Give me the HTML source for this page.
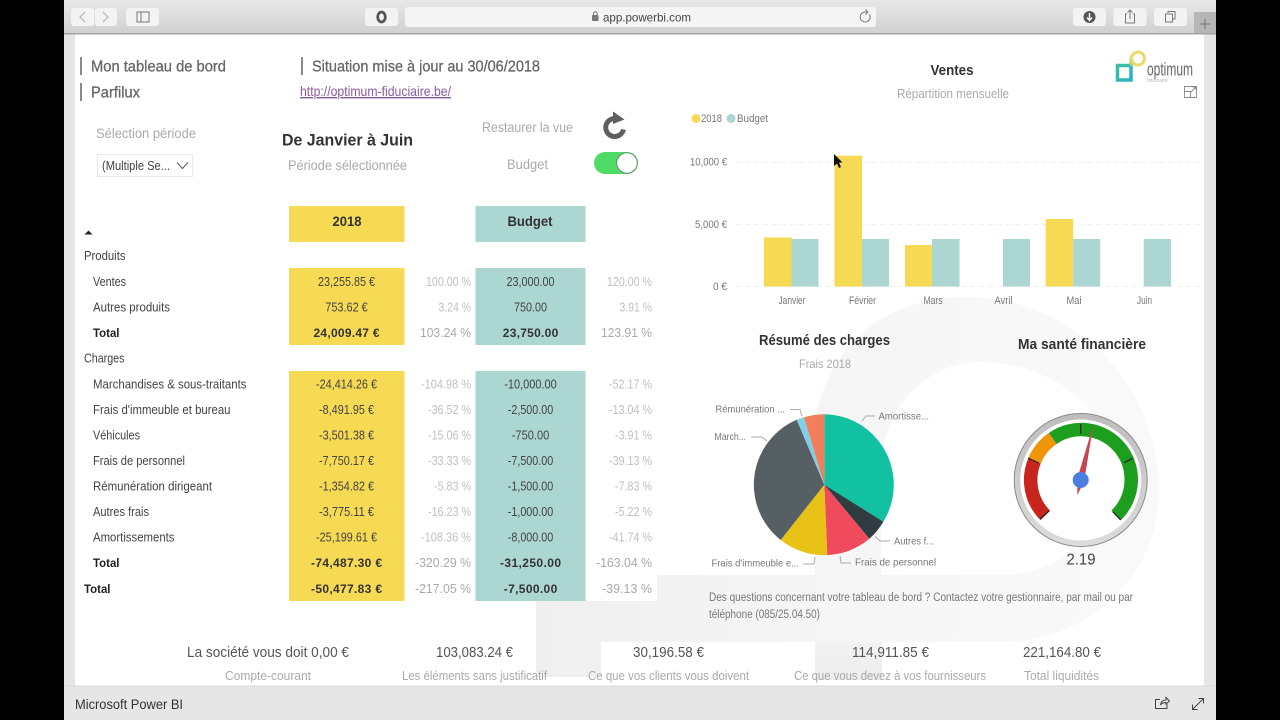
<!DOCTYPE html>
<html lang="fr">
<head>
<meta charset="utf-8">
<title>Microsoft Power BI</title>
<style>
html,body{margin:0;padding:0;background:#000;width:1280px;height:720px;overflow:hidden}
svg{display:block;filter:blur(.35px)}
text{font-family:"Liberation Sans",sans-serif;white-space:pre}
.lb{font-size:13px;fill:#444}
.b{font-weight:bold;fill:#222;font-size:12px}
.v{font-size:13px;fill:#444;text-anchor:middle}
.vb{font-size:12px;fill:#333;font-weight:bold;text-anchor:middle}
.p{font-size:13px;fill:#c0c0c0;text-anchor:end}
.pb{font-size:12.500px;fill:#aaa;text-anchor:end}
.h{font-size:16px;fill:#666;stroke:#666;stroke-width:.3px}
.s{font-size:14px;fill:#aaa}
.t{font-size:15px;font-weight:bold;fill:#333}
.c{font-size:11px;fill:#777}
.pl{font-size:10.500px;fill:#777}
.k{font-size:14.500px;fill:#555}
.ks{font-size:13px;fill:#aaa}
.ld{fill:none;stroke:#aaa;stroke-width:1}
.btn{fill:#f3f3f3}
</style>
</head>
<body>
<svg width="1280" height="720" viewBox="0 0 1280 720" xmlns="http://www.w3.org/2000/svg">
<defs>
<linearGradient id="tb" x1="0" y1="0" x2="0" y2="1"><stop offset="0" stop-color="#e8e8e8"/><stop offset="1" stop-color="#d0d0d0"/></linearGradient>
<linearGradient id="wm" gradientUnits="userSpaceOnUse" x1="536" y1="0" x2="1100" y2="0"><stop offset="0" stop-color="#efefef"/><stop offset=".55" stop-color="#f6f6f6"/><stop offset="1" stop-color="#f9f9fa"/></linearGradient>
<linearGradient id="st" x1="0" y1="0" x2="0" y2="1"><stop offset="0" stop-color="#f2f2f2"/><stop offset="1" stop-color="#ececec"/></linearGradient>
<linearGradient id="lg" x1="0" y1="0" x2="1" y2="1"><stop offset="0" stop-color="#3fbf9f"/><stop offset="1" stop-color="#25b3c4"/></linearGradient>
<linearGradient id="rg" x1="0" y1="0" x2="0" y2="1"><stop offset="0" stop-color="#bdbdbd"/><stop offset="1" stop-color="#dcdcdc"/></linearGradient>
</defs>
<rect width="1280" height="720" fill="#000"/>
<rect x="64" y="34" width="1152" height="653" fill="#fff"/>
<rect x="64" y="34" width="11" height="653" fill="#e6e6e6"/>
<rect x="1204" y="34" width="12" height="653" fill="#e6e6e6"/>

<!-- watermark -->
<path fill-rule="evenodd" fill="url(#wm)" d="M536 575H815V420C830 340 890 297 965 297C1075 297 1159 385 1159 490C1159 575 1090 642 1000 642H882V680H815V642H601V677H536ZM881 575H1000C1065 575 1115 525 1115 470C1115 410 1050 362 981 362C925 362 881 410 881 470Z"/>
<rect x="815" y="642" width="67" height="38" fill="url(#st)"/>
<rect x="536" y="575" width="121" height="26" fill="#fff"/>

<!-- toolbar -->
<rect x="64" y="0" width="1152" height="34" fill="url(#tb)"/>
<rect x="64" y="33" width="1152" height="1.500" fill="#a3a3a3"/>
<rect class="btn" x="71" y="8" width="23" height="18" rx="3"/>
<rect class="btn" x="95" y="8" width="22" height="18" rx="3"/>
<path d="M85 12L80 17L85 22" fill="none" stroke="#bbb" stroke-width="1.300"/>
<path d="M103 12L108 17L103 22" fill="none" stroke="#bbb" stroke-width="1.300"/>
<rect class="btn" x="126" y="8" width="33" height="18" rx="3"/>
<rect x="137" y="12" width="12" height="10" fill="none" stroke="#777"/><path d="M141 12V22" stroke="#777"/>
<rect class="btn" x="365" y="8" width="33" height="18" rx="3"/>
<ellipse cx="381.500" cy="17" rx="3.800" ry="5" fill="none" stroke="#555" stroke-width="2.800"/>
<rect x="405" y="7" width="471" height="20" rx="3" fill="#f5f5f5"/>
<rect x="592" y="15" width="6.500" height="6" rx="1" fill="#777"/><path d="M593.500 15V13.500a1.800 1.800 0 0 1 3.600 0V15" fill="none" stroke="#777"/>
<text x="603" y="21.500" font-size="12" fill="#444" textLength="88" lengthAdjust="spacingAndGlyphs">app.powerbi.com</text>
<path d="M869.500 14.500A5 5 0 1 1 865 12H868M865.500 9.500L868 12L865.500 14.500" fill="none" stroke="#777" stroke-width="1"/>
<rect class="btn" x="1073" y="8" width="33" height="18" rx="3"/>
<circle cx="1089.500" cy="17" r="6" fill="#555"/><path d="M1089.500 13V20M1087 17.500L1089.500 20.500L1092 17.500" fill="none" stroke="#f3f3f3" stroke-width="1.500"/>
<rect class="btn" x="1113.500" y="8" width="33" height="18" rx="3"/>
<path d="M1127 14H1125.500V23H1134.500V14H1133M1130 19V10M1127.500 12.500L1130 10L1132.500 12.500" fill="none" stroke="#777"/>
<rect class="btn" x="1154" y="8" width="33" height="18" rx="3"/>
<path d="M1168 13V11.500H1175V19H1173M1165.500 14H1172.500V22H1165.500Z" fill="none" stroke="#777"/>
<rect x="1194" y="12" width="22" height="21" fill="#b6b6b6"/>
<path d="M1205 19V29M1200 24H1210" stroke="#777" stroke-width="1"/>

<!-- header -->
<rect x="80" y="57" width="2" height="18" fill="#8a8a8a"/>
<rect x="80" y="83" width="2" height="18" fill="#8a8a8a"/>
<rect x="301" y="57" width="2" height="18" fill="#8a8a8a"/>
<text class="h" x="91" y="71.500" textLength="135" lengthAdjust="spacingAndGlyphs">Mon tableau de bord</text>
<text class="h" x="91" y="97.500" textLength="49" lengthAdjust="spacingAndGlyphs">Parfilux</text>
<text class="h" x="312" y="71.500" textLength="228" lengthAdjust="spacingAndGlyphs">Situation mise à jour au 30/06/2018</text>
<text x="300" y="96" font-size="14" fill="#8a5a9e" text-decoration="underline" textLength="151" lengthAdjust="spacingAndGlyphs">http://optimum-fiduciaire.be/</text>

<text class="s" x="96" y="138" textLength="100" lengthAdjust="spacingAndGlyphs">Sélection période</text>
<rect x="97.500" y="154.500" width="95" height="22" fill="#fff" stroke="#e8e8e8"/>
<text x="102" y="170" font-size="13" fill="#444" textLength="68" lengthAdjust="spacingAndGlyphs">(Multiple Se...</text>
<path d="M177 162.500L182.500 168.500L188 162.500" fill="none" stroke="#555" stroke-width="1"/>
<text x="282" y="145.500" font-size="17" font-weight="bold" fill="#333" textLength="131" lengthAdjust="spacingAndGlyphs">De Janvier à Juin</text>
<text class="s" x="288" y="170" textLength="119" lengthAdjust="spacingAndGlyphs">Période sélectionnée</text>
<text class="s" x="482" y="132" textLength="91" lengthAdjust="spacingAndGlyphs">Restaurer la vue</text>
<text class="s" x="507" y="169" textLength="41" lengthAdjust="spacingAndGlyphs">Budget</text>
<path d="M617 118.800A9 9 0 1 0 623.500 129.500" fill="none" stroke="#5f5f5f" stroke-width="5"/>
<path d="M613 111.500L624.500 119.500L613 124Z" fill="#5f5f5f"/>
<rect x="594" y="152" width="44" height="22" rx="11" fill="#4fdc66"/>
<circle cx="627" cy="163" r="10.300" fill="#fff" stroke="#5f8f68" stroke-width="1"/>

<!-- table fills -->
<rect x="289" y="206" width="115.500" height="36" fill="#f7da53"/>
<rect x="475.500" y="206" width="110" height="36" fill="#abd6d2"/>
<rect x="289" y="268" width="115.500" height="77" fill="#f7da53"/>
<rect x="475.500" y="268" width="110" height="77" fill="#abd6d2"/>
<rect x="289" y="371" width="115.500" height="230" fill="#f7da53"/>
<rect x="475.500" y="371" width="110" height="230" fill="#abd6d2"/>
<text x="347" y="226" font-size="14" font-weight="bold" fill="#333" text-anchor="middle" textLength="29" lengthAdjust="spacingAndGlyphs">2018</text>
<text x="530" y="226" font-size="14" font-weight="bold" fill="#333" text-anchor="middle" textLength="45" lengthAdjust="spacingAndGlyphs">Budget</text>
<path d="M84.500 234.500L88.500 230.500L92.500 234.500Z" fill="#222"/>

<!-- labels -->
<text class="lb" x="84" y="260" textLength="41.500" lengthAdjust="spacingAndGlyphs">Produits</text>
<text class="lb" x="93" y="286" textLength="33" lengthAdjust="spacingAndGlyphs">Ventes</text>
<text class="lb" x="93" y="311.500" textLength="77" lengthAdjust="spacingAndGlyphs">Autres produits</text>
<text class="lb b" x="93" y="337" textLength="26.500" lengthAdjust="spacingAndGlyphs">Total</text>
<text class="lb" x="84" y="362.500" textLength="40.500" lengthAdjust="spacingAndGlyphs">Charges</text>
<text class="lb" x="93" y="388.500" textLength="153.500" lengthAdjust="spacingAndGlyphs">Marchandises &amp; sous-traitants</text>
<text class="lb" x="93" y="414" textLength="137.500" lengthAdjust="spacingAndGlyphs">Frais d'immeuble et bureau</text>
<text class="lb" x="93" y="439.500" textLength="47" lengthAdjust="spacingAndGlyphs">Véhicules</text>
<text class="lb" x="93" y="465" textLength="92" lengthAdjust="spacingAndGlyphs">Frais de personnel</text>
<text class="lb" x="93" y="490.500" textLength="119" lengthAdjust="spacingAndGlyphs">Rémunération dirigeant</text>
<text class="lb" x="93" y="516" textLength="56" lengthAdjust="spacingAndGlyphs">Autres frais</text>
<text class="lb" x="93" y="541.500" textLength="81.500" lengthAdjust="spacingAndGlyphs">Amortissements</text>
<text class="lb b" x="93" y="567" textLength="26.500" lengthAdjust="spacingAndGlyphs">Total</text>
<text class="lb b" x="84" y="593" textLength="26.500" lengthAdjust="spacingAndGlyphs">Total</text>

<!-- 2018 -->
<text class="v" x="346.500" y="286" textLength="57" lengthAdjust="spacingAndGlyphs">23,255.85 €</text>
<text class="v" x="346.500" y="311.500" textLength="42.500" lengthAdjust="spacingAndGlyphs">753.62 €</text>
<text class="vb" x="346.500" y="337" textLength="66" lengthAdjust="spacing">24,009.47 €</text>
<text class="v" x="346.500" y="388.500" textLength="61" lengthAdjust="spacingAndGlyphs">-24,414.26 €</text>
<text class="v" x="346.500" y="414" textLength="55" lengthAdjust="spacingAndGlyphs">-8,491.95 €</text>
<text class="v" x="346.500" y="439.500" textLength="55" lengthAdjust="spacingAndGlyphs">-3,501.38 €</text>
<text class="v" x="346.500" y="465" textLength="55" lengthAdjust="spacingAndGlyphs">-7,750.17 €</text>
<text class="v" x="346.500" y="490.500" textLength="55" lengthAdjust="spacingAndGlyphs">-1,354.82 €</text>
<text class="v" x="346.500" y="516" textLength="55" lengthAdjust="spacingAndGlyphs">-3,775.11 €</text>
<text class="v" x="346.500" y="541.500" textLength="61" lengthAdjust="spacingAndGlyphs">-25,199.61 €</text>
<text class="vb" x="346.500" y="567" textLength="71" lengthAdjust="spacing">-74,487.30 €</text>
<text class="vb" x="346.500" y="593" textLength="71" lengthAdjust="spacing">-50,477.83 €</text>

<!-- pct 1 -->
<text class="p" x="471" y="286" textLength="45" lengthAdjust="spacingAndGlyphs">100.00 %</text>
<text class="p" x="471" y="311.500" textLength="32.500" lengthAdjust="spacingAndGlyphs">3.24 %</text>
<text class="pb" x="471" y="337" textLength="51" lengthAdjust="spacingAndGlyphs">103.24 %</text>
<text class="p" x="471" y="388.500" textLength="50" lengthAdjust="spacingAndGlyphs">-104.98 %</text>
<text class="p" x="471" y="414" textLength="43" lengthAdjust="spacingAndGlyphs">-36.52 %</text>
<text class="p" x="471" y="439.500" textLength="43" lengthAdjust="spacingAndGlyphs">-15.06 %</text>
<text class="p" x="471" y="465" textLength="43" lengthAdjust="spacingAndGlyphs">-33.33 %</text>
<text class="p" x="471" y="490.500" textLength="37" lengthAdjust="spacingAndGlyphs">-5.83 %</text>
<text class="p" x="471" y="516" textLength="43" lengthAdjust="spacingAndGlyphs">-16.23 %</text>
<text class="p" x="471" y="541.500" textLength="50" lengthAdjust="spacingAndGlyphs">-108.36 %</text>
<text class="pb" x="471" y="567" textLength="56" lengthAdjust="spacingAndGlyphs">-320.29 %</text>
<text class="pb" x="471" y="593" textLength="56" lengthAdjust="spacingAndGlyphs">-217.05 %</text>

<!-- Budget -->
<text class="v" x="530.500" y="286" textLength="48" lengthAdjust="spacingAndGlyphs">23,000.00</text>
<text class="v" x="530.500" y="311.500" textLength="33" lengthAdjust="spacingAndGlyphs">750.00</text>
<text class="vb" x="530.500" y="337" textLength="55.500" lengthAdjust="spacing">23,750.00</text>
<text class="v" x="530.500" y="388.500" textLength="52.500" lengthAdjust="spacingAndGlyphs">-10,000.00</text>
<text class="v" x="530.500" y="414" textLength="45.500" lengthAdjust="spacingAndGlyphs">-2,500.00</text>
<text class="v" x="530.500" y="439.500" textLength="37.500" lengthAdjust="spacingAndGlyphs">-750.00</text>
<text class="v" x="530.500" y="465" textLength="45.500" lengthAdjust="spacingAndGlyphs">-7,500.00</text>
<text class="v" x="530.500" y="490.500" textLength="45.500" lengthAdjust="spacingAndGlyphs">-1,500.00</text>
<text class="v" x="530.500" y="516" textLength="45.500" lengthAdjust="spacingAndGlyphs">-1,000.00</text>
<text class="v" x="530.500" y="541.500" textLength="45.500" lengthAdjust="spacingAndGlyphs">-8,000.00</text>
<text class="vb" x="530.500" y="567" textLength="61" lengthAdjust="spacing">-31,250.00</text>
<text class="vb" x="530.500" y="593" textLength="53.500" lengthAdjust="spacing">-7,500.00</text>

<!-- pct 2 -->
<text class="p" x="652" y="286" textLength="45" lengthAdjust="spacingAndGlyphs">120.00 %</text>
<text class="p" x="652" y="311.500" textLength="32.500" lengthAdjust="spacingAndGlyphs">3.91 %</text>
<text class="pb" x="652" y="337" textLength="51" lengthAdjust="spacingAndGlyphs">123.91 %</text>
<text class="p" x="652" y="388.500" textLength="43" lengthAdjust="spacingAndGlyphs">-52.17 %</text>
<text class="p" x="652" y="414" textLength="43" lengthAdjust="spacingAndGlyphs">-13.04 %</text>
<text class="p" x="652" y="439.500" textLength="37" lengthAdjust="spacingAndGlyphs">-3.91 %</text>
<text class="p" x="652" y="465" textLength="43" lengthAdjust="spacingAndGlyphs">-39.13 %</text>
<text class="p" x="652" y="490.500" textLength="37" lengthAdjust="spacingAndGlyphs">-7.83 %</text>
<text class="p" x="652" y="516" textLength="37" lengthAdjust="spacingAndGlyphs">-5.22 %</text>
<text class="p" x="652" y="541.500" textLength="43" lengthAdjust="spacingAndGlyphs">-41.74 %</text>
<text class="pb" x="652" y="567" textLength="56" lengthAdjust="spacingAndGlyphs">-163.04 %</text>
<text class="pb" x="652" y="593" textLength="50" lengthAdjust="spacingAndGlyphs">-39.13 %</text>

<!-- bar chart -->
<text class="t" x="952" y="75" text-anchor="middle" textLength="43" lengthAdjust="spacingAndGlyphs">Ventes</text>
<text x="953" y="98" font-size="13" fill="#aaa" text-anchor="middle" textLength="112" lengthAdjust="spacingAndGlyphs">Répartition mensuelle</text>
<circle cx="696" cy="118.500" r="4.500" fill="#f7da53"/>
<text class="c" x="701" y="122" textLength="21" lengthAdjust="spacingAndGlyphs">2018</text>
<circle cx="731" cy="118.500" r="4.500" fill="#abd6d2"/>
<text class="c" x="737" y="122" textLength="31" lengthAdjust="spacingAndGlyphs">Budget</text>
<g stroke="#f0f0f0" stroke-width="1" stroke-dasharray="5 4">
<path d="M736 162.500H1200M736 224.500H1200M736 286.500H1200"/>
</g>
<text class="c" x="727" y="165.500" text-anchor="end" textLength="37" lengthAdjust="spacingAndGlyphs">10,000 €</text>
<text class="c" x="727" y="228" text-anchor="end" textLength="32" lengthAdjust="spacingAndGlyphs">5,000 €</text>
<text class="c" x="727" y="290" text-anchor="end" textLength="14" lengthAdjust="spacingAndGlyphs">0 €</text>
<g fill="#f7da53">
<rect x="764" y="237.500" width="27.500" height="49"/>
<rect x="834.500" y="155.700" width="27.500" height="130.800"/>
<rect x="905" y="245" width="27" height="41.500"/>
<rect x="1045.700" y="219" width="27.500" height="67.500"/>
</g>
<g fill="#abd6d2">
<rect x="791.500" y="239" width="27" height="47.500"/>
<rect x="862" y="239" width="27" height="47.500"/>
<rect x="932" y="239" width="27.500" height="47.500"/>
<rect x="1003" y="239" width="27" height="47.500"/>
<rect x="1073.200" y="239" width="27" height="47.500"/>
<rect x="1143.700" y="239" width="27.300" height="47.500"/>
</g>
<text class="c" x="792" y="304" text-anchor="middle" textLength="27" lengthAdjust="spacingAndGlyphs">Janvier</text>
<text class="c" x="862.500" y="304" text-anchor="middle" textLength="27" lengthAdjust="spacingAndGlyphs">Février</text>
<text class="c" x="933" y="304" text-anchor="middle" textLength="19" lengthAdjust="spacingAndGlyphs">Mars</text>
<text class="c" x="1003.500" y="304" text-anchor="middle" textLength="18" lengthAdjust="spacingAndGlyphs">Avril</text>
<text class="c" x="1074" y="304" text-anchor="middle" textLength="15" lengthAdjust="spacingAndGlyphs">Mai</text>
<text class="c" x="1144.500" y="304" text-anchor="middle" textLength="15" lengthAdjust="spacingAndGlyphs">Juin</text>
<path d="M834 154V166L837 163.500L839 168L841 167L839 162.500H842.500Z" fill="#111"/>

<!-- logo -->
<rect x="1117.500" y="65.500" width="13.500" height="14.500" fill="none" stroke="url(#lg)" stroke-width="3.500"/>
<path d="M1131 66C1131 62 1130.500 60 1131.500 56" fill="none" stroke="#a9cf7f" stroke-width="3"/>
<circle cx="1138" cy="58.500" r="6.500" fill="none" stroke="#e6dc6a" stroke-width="3"/>
<text x="1147" y="75.500" font-size="18" fill="#666" textLength="46" lengthAdjust="spacingAndGlyphs">optimum</text>
<text x="1147" y="82" font-size="5.500" fill="#bbb" textLength="21" lengthAdjust="spacingAndGlyphs">fiduciaire</text>
<path d="M1184.500 86.500H1196.500V97.500H1184.500ZM1184.500 91.500H1190.500V97.500M1191 92L1196 87M1192.500 87H1196V90" fill="none" stroke="#888" stroke-width=".9"/>

<!-- pie -->
<text class="t" x="759" y="345" textLength="131" lengthAdjust="spacingAndGlyphs">Résumé des charges</text>
<text x="799" y="368" font-size="12" fill="#aaa" textLength="52" lengthAdjust="spacingAndGlyphs">Frais 2018</text>
<path d="M824.300 484.700V414.200A70.500 70.500 0 0 1 883.300 521.700Z" fill="#11c1a1"/>
<path d="M824.300 484.700L883.300 521.700A70.500 70.500 0 0 1 869.300 538.800Z" fill="#2f3c42"/>
<path d="M824.300 484.700L869.300 538.800A70.500 70.500 0 0 1 827.300 555.100Z" fill="#f04a5d"/>
<path d="M824.300 484.700L827.300 555.100A70.500 70.500 0 0 1 780.700 540Z" fill="#e9c217"/>
<path d="M824.300 484.700L780.700 540A70.500 70.500 0 0 1 796.700 419.800Z" fill="#566064"/>
<path d="M824.300 484.700L796.700 419.800A70.500 70.500 0 0 1 804 417.200Z" fill="#7fcfe6"/>
<path d="M824.300 484.700L804 417.200A70.500 70.500 0 0 1 824.300 414.200Z" fill="#f27f5b"/>
<path class="ld" d="M790 409.500H800L802 416M751 437H762L767 441M862 421L866 416H875M875 536.500L880 541H890M840 556L841 563H851M803 564H814L815 557"/>
<text class="pl" x="715.500" y="412.500" textLength="69.500" lengthAdjust="spacingAndGlyphs">Rémunération ...</text>
<text class="pl" x="714.500" y="440" textLength="31.500" lengthAdjust="spacingAndGlyphs">March...</text>
<text class="pl" x="878.500" y="419.500" textLength="50.500" lengthAdjust="spacingAndGlyphs">Amortisse...</text>
<text class="pl" x="894" y="544.500" textLength="40" lengthAdjust="spacingAndGlyphs">Autres f...</text>
<text class="pl" x="855" y="565.500" textLength="81" lengthAdjust="spacingAndGlyphs">Frais de personnel</text>
<text class="pl" x="711.500" y="566.500" textLength="87.500" lengthAdjust="spacingAndGlyphs">Frais d'immeuble e...</text>

<!-- gauge -->
<text class="t" x="1018" y="349" textLength="128" lengthAdjust="spacingAndGlyphs">Ma santé financière</text>
<circle cx="1080.700" cy="480" r="66.500" fill="url(#rg)" stroke="#8a8a8a" stroke-width="1"/>
<circle cx="1080.700" cy="480" r="60.500" fill="#fff"/>
<g fill="none" stroke-width="13.500">
<path d="M1045.300 515.400A50 50 0 0 1 1034.500 460.900" stroke="#c8261c"/>
<path d="M1034.500 460.900A50 50 0 0 1 1052.700 438.500" stroke="#f09508"/>
<path d="M1052.700 438.500A50 50 0 0 1 1116.100 515.400" stroke="#1e9e1e"/>
</g>
<path d="M1080.700 424V434M1028 458L1039 463M1132.700 458.300L1124 462.700M1040 519L1049 511M1120.700 520L1112.700 511.700" stroke="#222" stroke-width="1.200" fill="none"/>
<path d="M1093.300 425L1084 482L1077.300 495L1077.500 478Z" fill="#c8464f"/>
<circle cx="1080.700" cy="480" r="8" fill="#4a7fe0"/>
<text x="1081" y="564.500" font-size="16" fill="#444" text-anchor="middle" textLength="29" lengthAdjust="spacingAndGlyphs">2.19</text>

<!-- note -->
<text x="709" y="601" font-size="11.500" fill="#777" textLength="424" lengthAdjust="spacingAndGlyphs">Des questions concernant votre tableau de bord ? Contactez votre gestionnaire, par mail ou par</text>
<text x="709" y="618" font-size="11.500" fill="#777" textLength="111" lengthAdjust="spacingAndGlyphs">téléphone (085/25.04.50)</text>

<!-- KPIs -->
<text class="k" x="187" y="657" textLength="162" lengthAdjust="spacingAndGlyphs">La société vous doit 0,00 €</text>
<text class="k" x="436" y="657" textLength="77" lengthAdjust="spacingAndGlyphs">103,083.24 €</text>
<text class="k" x="633" y="657" textLength="71" lengthAdjust="spacingAndGlyphs">30,196.58 €</text>
<text class="k" x="852" y="657" textLength="77" lengthAdjust="spacingAndGlyphs">114,911.85 €</text>
<text class="k" x="1023" y="657" textLength="78" lengthAdjust="spacingAndGlyphs">221,164.80 €</text>
<text class="ks" x="225" y="680" textLength="86" lengthAdjust="spacingAndGlyphs">Compte-courant</text>
<text class="ks" x="402" y="680" textLength="145" lengthAdjust="spacingAndGlyphs">Les éléments sans justificatif</text>
<text class="ks" x="588" y="680" textLength="161" lengthAdjust="spacingAndGlyphs">Ce que vos clients vous doivent</text>
<text class="ks" x="794" y="680" textLength="192" lengthAdjust="spacingAndGlyphs">Ce que vous devez à vos fournisseurs</text>
<text class="ks" x="1024" y="680" textLength="75" lengthAdjust="spacingAndGlyphs">Total liquidités</text>

<!-- bottom bar -->
<rect x="64" y="686" width="1152" height="34" fill="#e6e6e6"/>
<rect x="64" y="685.500" width="1152" height="1" fill="#dadada"/>
<text x="75" y="709" font-size="13.500" fill="#333" textLength="108" lengthAdjust="spacingAndGlyphs">Microsoft Power BI</text>
<path d="M1160 699.500H1155.500V708.500H1167V704M1160.500 705C1161 701.500 1163 700 1166 700V697.500L1169.500 701L1166 704V702.500C1164 702.500 1162 703 1160.500 705Z" fill="none" stroke="#444" stroke-width="1"/>
<path d="M1192.500 709.500L1203.500 698.500M1198.500 698.500H1203.500V703.500M1192.500 704.500V709.500H1197.500" fill="none" stroke="#444" stroke-width="1"/>
</svg>
</body>
</html>
